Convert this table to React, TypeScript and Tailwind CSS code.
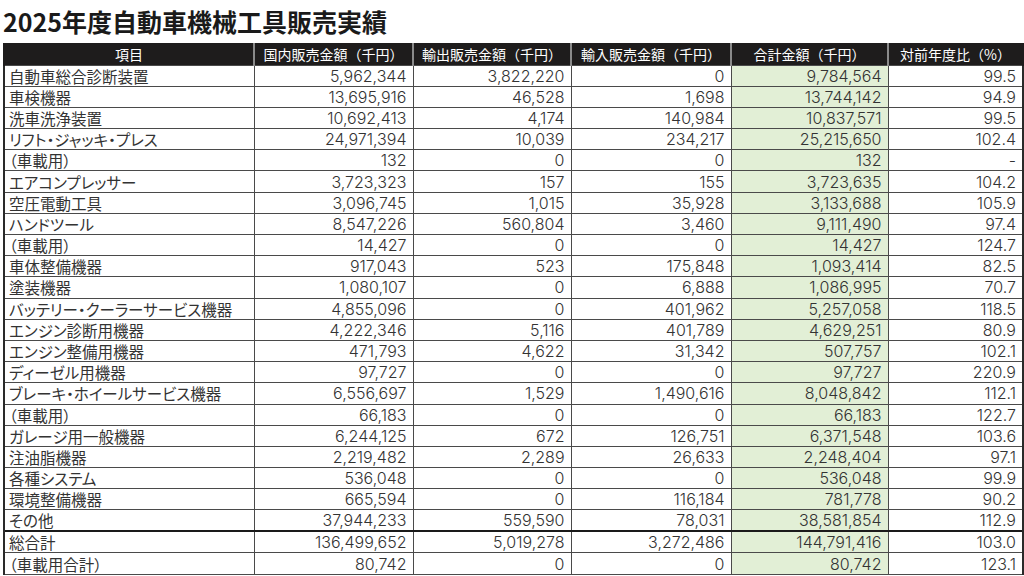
const rows: string[][] = [
  ["自動車総合診断装置", "5,962,344", "3,822,220", "0", "9,784,564", "99.5"],
  ["車検機器", "13,695,916", "46,528", "1,698", "13,744,142", "94.9"],
  ["洗車洗浄装置", "10,692,413", "4,174", "140,984", "10,837,571", "99.5"],
  ["リフト・ジャッキ・プレス", "24,971,394", "10,039", "234,217", "25,215,650", "102.4"],
  ["（車載用）", "132", "0", "0", "132", "-"],
  ["エアコンプレッサー", "3,723,323", "157", "155", "3,723,635", "104.2"],
  ["空圧電動工具", "3,096,745", "1,015", "35,928", "3,133,688", "105.9"],
  ["ハンドツール", "8,547,226", "560,804", "3,460", "9,111,490", "97.4"],
  ["（車載用）", "14,427", "0", "0", "14,427", "124.7"],
  ["車体整備機器", "917,043", "523", "175,848", "1,093,414", "82.5"],
  ["塗装機器", "1,080,107", "0", "6,888", "1,086,995", "70.7"],
  ["バッテリー・クーラーサービス機器", "4,855,096", "0", "401,962", "5,257,058", "118.5"],
  ["エンジン診断用機器", "4,222,346", "5,116", "401,789", "4,629,251", "80.9"],
  ["エンジン整備用機器", "471,793", "4,622", "31,342", "507,757", "102.1"],
  ["ディーゼル用機器", "97,727", "0", "0", "97,727", "220.9"],
  ["ブレーキ・ホイールサービス機器", "6,556,697", "1,529", "1,490,616", "8,048,842", "112.1"],
  ["（車載用）", "66,183", "0", "0", "66,183", "122.7"],
  ["ガレージ用一般機器", "6,244,125", "672", "126,751", "6,371,548", "103.6"],
  ["注油脂機器", "2,219,482", "2,289", "26,633", "2,248,404", "97.1"],
  ["各種システム", "536,048", "0", "0", "536,048", "99.9"],
  ["環境整備機器", "665,594", "0", "116,184", "781,778", "90.2"],
  ["その他", "37,944,233", "559,590", "78,031", "38,581,854", "112.9"],
];

const totals: string[][] = [
  ["総合計", "136,499,652", "5,019,278", "3,272,486", "144,791,416", "103.0"],
  ["（車載用合計）", "80,742", "0", "0", "80,742", "123.1"],
];

const headers = ["項目", "国内販売金額（千円）", "輸出販売金額（千円）", "輸入販売金額（千円）", "合計金額（千円）", "対前年度比（%）"];

function Row({ cells, thick }: { cells: string[]; thick?: boolean }) {
  const top = thick ? "border-t-2 border-t-[#1a1a1a]" : "";
  return (
    <tr className="h-[21.2px]">
      {cells.map((c, i) =>
        i === 0 ? (
          <td
            key={i}
            className={`border border-[#4a4a4a] ${top} border-l-2 border-l-[#2a2a2a] p-0 pl-[4px] text-left text-[15.5px] leading-[20px] text-[#333] font-['Noto_Sans_CJK_JP',sans-serif] [font-feature-settings:'palt'] whitespace-nowrap`}
          >
            {c}
          </td>
        ) : (
          <td
            key={i}
            className={`border border-[#4a4a4a] ${top} ${i === 4 ? "bg-[#e2efd6]" : ""} ${i === 5 ? "border-r-2 border-r-[#2a2a2a]" : ""} p-0 pr-[6px] text-right text-[16px] leading-[20px] font-light text-[#333] font-['Inter','Noto_Sans_CJK_JP',sans-serif] proportional-nums whitespace-nowrap`}
          >
            {c}
          </td>
        )
      )}
    </tr>
  );
}

export default function App() {
  return (
    <div className="w-[1024px] h-[576px] bg-white overflow-hidden">
      <div className="h-[43px] pl-[3px] pt-[6px]">
        <h1 className="text-[25px] leading-[30px] font-bold text-[#1a1a1a] font-['Noto_Sans_CJK_JP',sans-serif]">
          2025年度自動車機械工具販売実績
        </h1>
      </div>
      <table className="ml-[3px] w-[1019px] table-fixed border-collapse">
        <colgroup>
          <col className="w-[250px]" />
          <col className="w-[159px]" />
          <col className="w-[158px]" />
          <col className="w-[160px]" />
          <col className="w-[157px]" />
          <col className="w-[135px]" />
        </colgroup>
        <thead>
          <tr className="h-[22px] bg-[#1e1c1c]">
            {headers.map((h, i) => (
              <th
                key={i}
                className="border-x-2 border-x-[#8a8a8a] first:border-l-[#1e1c1c] last:border-r-[#1e1c1c] p-0 text-center text-[14px] leading-[20px] font-normal text-white font-['Noto_Sans_CJK_JP',sans-serif] whitespace-nowrap"
              >
                {h}
              </th>
            ))}
          </tr>
        </thead>
        <tbody>
          {rows.map((r, i) => (
            <Row key={i} cells={r} />
          ))}
          {totals.map((r, i) => (
            <Row key={`t${i}`} cells={r} thick={i === 0} />
          ))}
        </tbody>
      </table>
    </div>
  );
}
